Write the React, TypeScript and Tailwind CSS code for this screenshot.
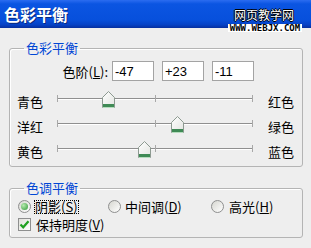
import React from 'react';

const sliders = [
  { left: '青色', right: '红色', value: -47 },
  { left: '洋红', right: '绿色', value: 23 },
  { left: '黄色', right: '蓝色', value: -11 },
];

function Thumb() {
  return (
    <svg width="13" height="17" viewBox="0 0 13 17">
      <defs>
        <linearGradient id="thumbFill" x1="0" y1="0" x2="1" y2="1">
          <stop offset="0" stopColor="#ffffff" />
          <stop offset="1" stopColor="#e2e4e0" />
        </linearGradient>
      </defs>
      <polygon points="0.5,6.5 6.5,0.5 12.5,6.5 12.5,16.5 0.5,16.5" fill="url(#thumbFill)" stroke="#8d9a91" />
      <rect x="1" y="13" width="11" height="3" fill="#3f8a55" />
      <rect x="1" y="16" width="11" height="1" fill="#b5dcbd" />
    </svg>
  );
}

function SliderRow({ left, right, value }: { left: string; right: string; value: number }) {
  // track is 196px wide, 0 sits in the middle
  const center = 98 + (value / 100) * 98;
  return (
    <>
      <div className="h-[25px] pt-[4px] flex items-center whitespace-nowrap">{left}</div>
      <div className="relative h-[25px]">
        <div className="mt-[11px] h-[1px] bg-[#8f8f8f] shadow-[0_1px_0_#ffffff]" />
        <div className="absolute left-0 top-[8px] w-[1px] h-[7px] bg-[#a8a8a8]" />
        <div className="absolute left-[98px] top-[8px] w-[1px] h-[7px] bg-[#a8a8a8]" />
        <div className="absolute right-0 top-[8px] w-[1px] h-[7px] bg-[#a8a8a8]" />
        <div className="absolute top-[4px]" style={{ left: center - 6.5 }}>
          <Thumb />
        </div>
      </div>
      <div className="h-[25px] pt-[4px] flex items-center whitespace-nowrap">{right}</div>
    </>
  );
}

function Radio({ checked }: { checked?: boolean }) {
  return (
    <span className="w-[13px] h-[13px] rounded-full border border-[#8e8f8f] bg-[linear-gradient(135deg,#d6d6d0,#ffffff)] flex items-center justify-center shrink-0">
      {checked && (
        <span className="w-[7px] h-[7px] rounded-full bg-[radial-gradient(circle_at_35%_35%,#b8eab0,#2f9a37)]" />
      )}
    </span>
  );
}

export default function App() {
  return (
    <div className="w-[311px] h-[248px] bg-[#eeeeee] text-[13px] leading-[15px] text-black font-['Noto_Sans_CJK_SC',sans-serif] overflow-hidden">
      {/* title bar */}
      <div className="relative h-[28px] bg-[linear-gradient(to_bottom,#2b6cf0_0%,#0b55e2_14%,#0750dc_70%,#0642c6_88%,#062f9f_100%)]">
        <div className="pl-[4px] text-[16px] leading-[28px] font-bold text-white [text-shadow:1px_1px_0_#0a2a80]">
          色彩平衡
        </div>
        <div className="absolute left-[234px] top-[8px] text-[12px] leading-[14px] text-white [text-shadow:-1px_0_0_#000,1px_0_0_#000,0_-1px_0_#000,0_1px_0_#000]">
          网页教学网
        </div>
        <div className="absolute left-[228px] top-[24px] w-[74px] h-[8px] bg-white text-black text-[9px] leading-[8px] font-bold text-center font-['DejaVu_Sans_Mono',monospace]">
          WWW.WEBJX.COM
        </div>
      </div>

      {/* colour balance group */}
      <fieldset className="ml-[9px] mt-[13px] w-[294px] border border-[#b4b4b4] rounded-[3px] shadow-[inset_1px_1px_0_#ffffff] pb-[4px]">
        <legend className="ml-[14px] px-[2px] leading-[14px] text-[#0046d5]">色彩平衡</legend>
        <div className="flex items-center justify-end pr-[48px] mt-[6px] h-[20px]">
          <span className="mr-[4px]">
            色阶(<span className="underline">L</span>):
          </span>
          {['-47', '+23', '-11'].map((v, i) => (
            <input
              key={v}
              readOnly
              value={v}
              className={`w-[42px] h-[20px] border border-[#a3a3a3] bg-white pl-[2px] text-[13px] font-['Liberation_Sans',sans-serif] outline-none ${i > 0 ? 'ml-[8px]' : ''}`}
            />
          ))}
        </div>
        <div className="grid grid-cols-[25px_196px_25px] gap-x-[15px] pl-[7px] mt-[6px]">
          {sliders.map((s) => (
            <SliderRow key={s.left} {...s} />
          ))}
        </div>
      </fieldset>

      {/* tone balance group */}
      <fieldset className="ml-[9px] mt-[14px] w-[294px] border border-[#b4b4b4] rounded-[3px] shadow-[inset_1px_1px_0_#ffffff] pb-[5px]">
        <legend className="ml-[14px] px-[2px] leading-[14px] text-[#0046d5]">色调平衡</legend>
        <div className="flex items-center pl-[8px] mt-[4px] h-[15px]">
          <div className="w-[90px] flex items-center gap-[3px]">
            <Radio checked />
            <span className="border border-dotted border-black leading-[12px]">
              阴影(<span className="underline">S</span>)
            </span>
          </div>
          <div className="w-[103px] flex items-center gap-[4px]">
            <Radio />
            <span>
              中间调(<span className="underline">D</span>)
            </span>
          </div>
          <div className="flex items-center gap-[5px]">
            <Radio />
            <span>
              高光(<span className="underline">H</span>)
            </span>
          </div>
        </div>
        <div className="flex items-center pl-[8px] mt-[3px] h-[15px] gap-[5px]">
          <span className="w-[13px] h-[13px] border border-[#8e8f8f] bg-[linear-gradient(135deg,#e0e0da,#ffffff)] flex items-center justify-center">
            <svg width="11" height="11" viewBox="0 0 11 11">
              <path d="M1.5 5.5 L4.2 8.3 L9.5 2.2" fill="none" stroke="#21a121" strokeWidth="2.2" />
            </svg>
          </span>
          <span>
            保持明度(<span className="underline">V</span>)
          </span>
        </div>
      </fieldset>
    </div>
  );
}
